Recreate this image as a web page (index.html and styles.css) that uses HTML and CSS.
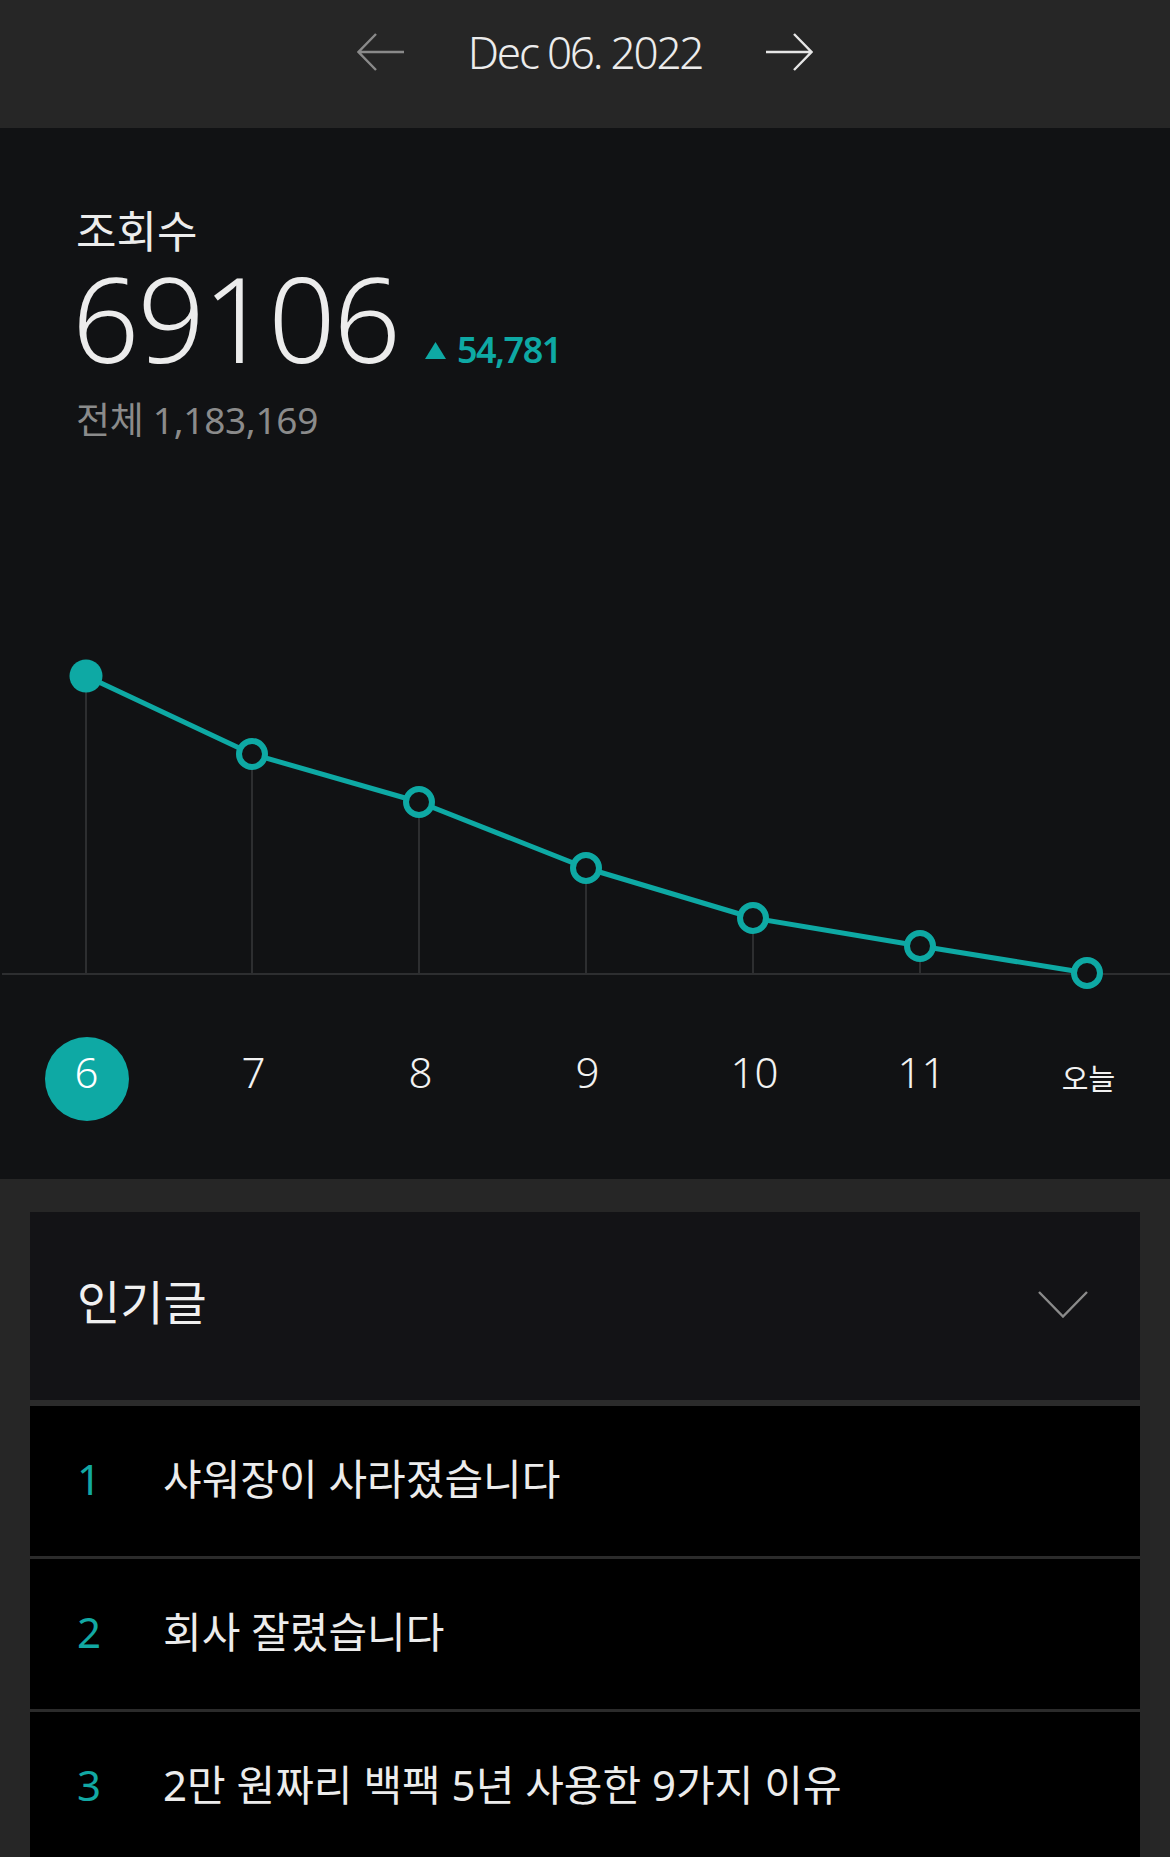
FILE: index.html
```html
<!DOCTYPE html>
<html lang="ko">
<head>
<meta charset="utf-8">
<title>통계</title>
<link rel="stylesheet" href="styles.css">
</head>
<body>
<div class="page">
  <header class="datebar">
    <svg class="arrow arrow-prev" width="48" height="38" viewBox="0 0 48 38"><path d="M47 19H2M19 1L1.5 19L19 37" fill="none" stroke="currentColor" stroke-width="2.4"/></svg>
    <div class="date">Dec 06. 2022</div>
    <svg class="arrow arrow-next" width="48" height="38" viewBox="0 0 48 38"><path d="M1 19H46M29 1L46.5 19L29 37" fill="none" stroke="currentColor" stroke-width="2.4"/></svg>
  </header>

  <section class="stats">
    <div class="stat-label">조회수</div>
    <div class="stat-main">
      <span class="stat-value">69106</span>
      <span class="stat-delta"><svg class="tri" width="21" height="17" viewBox="0 0 21 17"><path d="M10.5 0L21 17H0Z" fill="currentColor"/></svg>54,781</span>
    </div>
    <div class="stat-total">전체 1,183,169</div>

    <svg class="chart" width="1170" height="360" viewBox="0 0 1170 360">
      <g stroke="#2d2e30" stroke-width="2">
        <line x1="2" y1="333" x2="1170" y2="333"/>
        <line x1="86" y1="35" x2="86" y2="333"/>
        <line x1="252" y1="113" x2="252" y2="333"/>
        <line x1="419" y1="161" x2="419" y2="333"/>
        <line x1="586" y1="227" x2="586" y2="333"/>
        <line x1="753" y1="277" x2="753" y2="333"/>
        <line x1="920" y1="305" x2="920" y2="333"/>
      </g>
      <polyline points="86,35 252,113 419,161 586,227 753,277 920,305 1087,332" fill="none" stroke="#0ea9a4" stroke-width="5" stroke-linejoin="round"/>
      <circle cx="86" cy="35" r="16.5" fill="#0ea9a4"/>
      <g fill="#111214" stroke="#0ea9a4" stroke-width="6">
        <circle cx="252" cy="113" r="13"/>
        <circle cx="419" cy="161" r="13"/>
        <circle cx="586" cy="227" r="13"/>
        <circle cx="753" cy="277" r="13"/>
        <circle cx="920" cy="305" r="13"/>
        <circle cx="1087" cy="332" r="13"/>
      </g>
    </svg>

    <div class="days">
      <div class="day"><span class="day-num selected">6</span></div>
      <div class="day"><span class="day-num">7</span></div>
      <div class="day"><span class="day-num">8</span></div>
      <div class="day"><span class="day-num">9</span></div>
      <div class="day"><span class="day-num">10</span></div>
      <div class="day"><span class="day-num">11</span></div>
      <div class="day"><span class="day-today">오늘</span></div>
    </div>
  </section>

  <section class="popular">
    <div class="card">
      <div class="card-head">
        <span class="card-title">인기글</span>
        <svg class="chevron" width="50" height="27" viewBox="0 0 50 27"><path d="M1 1L25 25.5L49 1" fill="none" stroke="#8a8a8a" stroke-width="2.4"/></svg>
      </div>
      <ol class="posts">
        <li class="post"><span class="rank">1</span><span class="post-title">샤워장이 사라졌습니다</span></li>
        <li class="post"><span class="rank">2</span><span class="post-title">회사 잘렸습니다</span></li>
        <li class="post"><span class="rank">3</span><span class="post-title">2만 원짜리 백팩 5년 사용한 9가지 이유</span></li>
      </ol>
    </div>
  </section>
</div>
</body>
</html>
```

FILE: styles.css
```css
* { box-sizing: border-box; }

html, body {
  margin: 0;
  padding: 0;
  background: #262626;
}

body {
  font-family: "Noto Sans", "Noto Sans CJK KR", sans-serif;
  color: #ececec;
}

.page {
  width: 1170px;
  overflow: hidden;
}

/* ---------- date bar ---------- */
.datebar {
  height: 128px;
  background: #262626;
  display: flex;
  justify-content: center;
  align-items: center;
  gap: 62px;
  padding-bottom: 24px;
}

.arrow { display: block; }
.arrow-prev { color: #8a8a8a; }
.arrow-next { color: #e6e6e6; }

.date {
  font-size: 44px;
  line-height: 52px;
  font-weight: 300;
  letter-spacing: -2.2px;
  color: #ececec;
  width: 236px;
  text-align: center;
  white-space: nowrap;
}

/* ---------- stats ---------- */
.stats {
  background: #111214;
  padding-top: 78px;
  padding-bottom: 58px;
}

.stat-label {
  margin-left: 76px;
  font-size: 44px;
  line-height: 50px;
  color: #ececec;
}

.stat-main {
  margin-left: 72px;
  margin-top: 7px;
  display: flex;
  align-items: baseline;
}

.stat-value {
  font-size: 118px;
  line-height: 110px;
  font-weight: 300;
  letter-spacing: -2px;
  color: #ececec;
}

.stat-delta {
  margin-left: 26px;
  font-size: 36px;
  font-weight: 600;
  letter-spacing: -1.5px;
  color: #0ea9a4;
}

.tri {
  display: inline-block;
  margin-right: 11px;
  vertical-align: 4px;
}

.stat-total {
  margin-left: 76px;
  margin-top: 23px;
  font-size: 37px;
  line-height: 46px;
  letter-spacing: -0.3px;
  color: #8b8b8b;
}

.chart {
  display: block;
  margin-top: 198px;
}

.days {
  margin-top: 36px;
  padding-left: 3px;
  display: grid;
  grid-template-columns: repeat(7, 167px);
}

.day {
  height: 84px;
  display: flex;
  justify-content: center;
  align-items: center;
}

.day-num {
  font-size: 42px;
  line-height: 70px;
  padding-bottom: 14px;
  font-weight: 300;
  color: #f2f2f2;
  text-align: center;
}

.day-num.selected {
  width: 84px;
  height: 84px;
  border-radius: 50%;
  background: #0ea9a4;
  color: #ffffff;
}

.day-today {
  font-size: 29px;
  line-height: 84px;
  color: #f2f2f2;
}

/* ---------- popular posts ---------- */
.popular {
  padding: 33px 30px 0;
}

.card {
  background: #2b2b2b;
}

.card-head {
  height: 188px;
  background: #131316;
  display: flex;
  align-items: center;
  justify-content: space-between;
  padding: 0 52px 8px 47px;
}

.card-title {
  font-size: 47px;
  line-height: 56px;
  color: #f0f0f0;
}

.chevron { display: block; margin-top: 4px; }

.posts {
  list-style: none;
  margin: 0;
  padding: 6px 0 0;
  display: flex;
  flex-direction: column;
  gap: 3px;
}

.post {
  height: 150px;
  background: #000000;
  display: flex;
  align-items: center;
  padding-left: 47px;
  padding-bottom: 4px;
}

.rank {
  width: 86px;
  flex: none;
  font-size: 42px;
  line-height: 52px;
  color: #12a8a3;
}

.post-title {
  font-size: 42px;
  line-height: 52px;
  color: #ececec;
  white-space: nowrap;
}
```
